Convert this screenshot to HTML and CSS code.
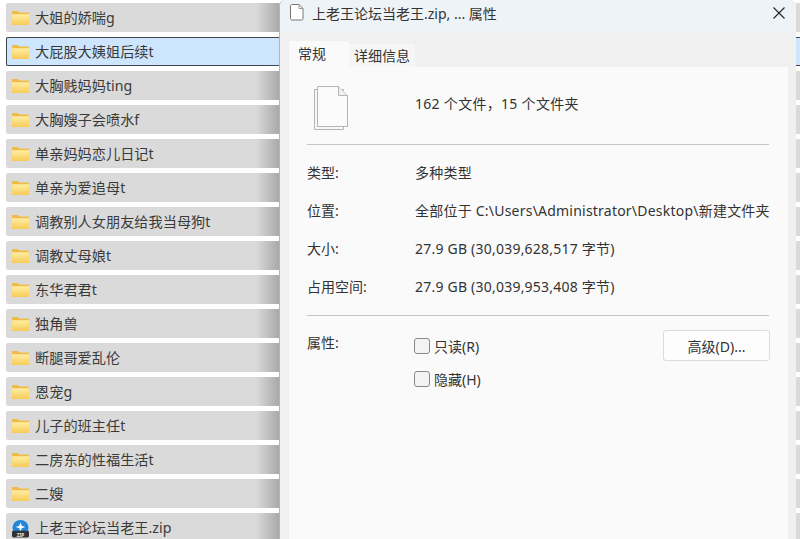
FILE: index.html
```html
<!DOCTYPE html>
<html lang="zh-CN">
<head>
<meta charset="utf-8">
<title>属性</title>
<link rel="stylesheet" href="styles.css">
</head>
<body>
<svg class="defs" width="0" height="0" aria-hidden="true">
  <defs>
    <linearGradient id="fg" x1="0" y1="0" x2="0" y2="1">
      <stop offset="0" stop-color="#ffeea6"/>
      <stop offset="1" stop-color="#f8cb57"/>
    </linearGradient>
    <symbol id="folder" viewBox="0 0 18 15">
      <path d="M0 1.200C0 .5.5 0 1.200 0H6l1.800 1.700H17c.6 0 1 .4 1 1V14c0 .6-.4 1-1 1H1c-.6 0-1-.4-1-1Z" fill="#efbb45"/>
      <path d="M0 3.400h18V14c0 .6-.4 1-1 1H1c-.6 0-1-.4-1-1Z" fill="url(#fg)"/>
    </symbol>
  </defs>
</svg>

<ul class="list">
  <li class="row"><svg class="ficon"><use href="#folder"/></svg>大姐的娇喘g</li>
  <li class="row row-sel"><svg class="ficon"><use href="#folder"/></svg>大屁股大姨姐后续t</li>
  <li class="row"><svg class="ficon"><use href="#folder"/></svg>大胸贱妈妈ting</li>
  <li class="row"><svg class="ficon"><use href="#folder"/></svg>大胸嫂子会喷水f</li>
  <li class="row"><svg class="ficon"><use href="#folder"/></svg>单亲妈妈恋儿日记t</li>
  <li class="row"><svg class="ficon"><use href="#folder"/></svg>单亲为爱追母t</li>
  <li class="row"><svg class="ficon"><use href="#folder"/></svg>调教别人女朋友给我当母狗t</li>
  <li class="row"><svg class="ficon"><use href="#folder"/></svg>调教丈母娘t</li>
  <li class="row"><svg class="ficon"><use href="#folder"/></svg>东华君君t</li>
  <li class="row"><svg class="ficon"><use href="#folder"/></svg>独角兽</li>
  <li class="row"><svg class="ficon"><use href="#folder"/></svg>断腿哥爱乱伦</li>
  <li class="row"><svg class="ficon"><use href="#folder"/></svg>恩宠g</li>
  <li class="row"><svg class="ficon"><use href="#folder"/></svg>儿子的班主任t</li>
  <li class="row"><svg class="ficon"><use href="#folder"/></svg>二房东的性福生活t</li>
  <li class="row"><svg class="ficon"><use href="#folder"/></svg>二嫂</li>
  <li class="row">
    <svg class="ficon ficon-zip" viewBox="0 0 18 19">
      <circle cx="9" cy="9" r="8.500" fill="#1f86dc"/>
      <path d="M9 3l1.300 3.700L14 8l-3.700 1.300L9 13 7.700 9.300 4 8l3.700-1.300Z" fill="#fff"/>
      <rect x="0" y="12" width="18" height="7" rx="1.500" fill="#2f3338"/>
      <text x="9" y="18" class="zip-label">ZIP</text>
    </svg>上老王论坛当老王.zip
  </li>
</ul>

<section class="dialog">
  <header class="titlebar">
    <svg class="title-icon" viewBox="0 0 14 17">
      <path d="M1.500.5h7.500l4 4v10a1.500 1.500 0 0 1-1.500 1.500h-10A1.500 1.500 0 0 1 .5 14.500V1.500Z" fill="#fff" stroke="#777"/>
      <path d="M9 .5v4h4" fill="none" stroke="#999"/>
    </svg>
    <span class="title-text">上老王论坛当老王.zip, ... 属性</span>
    <svg class="close" viewBox="0 0 12 12"><path d="M.5.5l11 11M11.500.5l-11 11" stroke="#222" stroke-width="1.100" fill="none"/></svg>
  </header>

  <nav class="tabs">
    <span class="tab tab-on">常规</span>
    <span class="tab">详细信息</span>
  </nav>

  <div class="panel">
    <div class="summary">
      <svg class="doc-icon" viewBox="0 0 34 44">
        <path d="M.5 3.500h29v40H.5Z" fill="#f7f7f7" stroke="#b4b4b4"/>
        <path d="M3.500.5h21l9 9v31h-30Z" fill="#fbfbfb" stroke="#b4b4b4"/>
        <path d="M24.500.5v9h9" fill="#f0f0f0" stroke="#b4b4b4"/>
      </svg>
      <span class="summary-text">162 个文件，15 个文件夹</span>
    </div>
    <hr class="rule">
    <dl class="info">
      <div class="info-row"><dt>类型:</dt><dd>多种类型</dd></div>
      <div class="info-row"><dt>位置:</dt><dd>全部位于 C:\Users\Administrator\Desktop\新建文件夹</dd></div>
      <div class="info-row"><dt>大小:</dt><dd>27.9 GB (30,039,628,517 字节)</dd></div>
      <div class="info-row"><dt>占用空间:</dt><dd>27.9 GB (30,039,953,408 字节)</dd></div>
    </dl>
    <hr class="rule">
    <div class="attrs">
      <span class="attrs-label">属性:</span>
      <div class="checks">
        <label class="check"><span class="box"></span>只读(R)</label>
        <label class="check"><span class="box"></span>隐藏(H)</label>
      </div>
      <span class="btn">高级(D)...</span>
    </div>
  </div>
</section>
</body>
</html>
```

FILE: styles.css
```css
* { box-sizing: border-box; }
html, body { height: 100%; }
body {
  margin: 0;
  overflow: hidden;
  background: #fff;
  color: #333;
  font-family: "Noto Sans", "Noto Sans CJK SC", sans-serif;
  font-size: 14px;
}
.defs { position: absolute; }

.list {
  list-style: none;
  margin: 0;
  padding: 3px 0 0 6px;
  display: flex;
  flex-direction: column;
  gap: 5px;
}
.row {
  height: 29px;
  display: flex;
  align-items: center;
  gap: 6px;
  padding: 1px 0 0 6px;
  background: linear-gradient(90deg, #dadada 0, #dadada 250px, #a9a9a9 273px, #dadada 273px);
  border-radius: 2px 0 0 2px;
  font-size: 14.200px;
  line-height: 1;
  color: #3a3a3a;
  white-space: nowrap;
}
.row-sel {
  background: #cde6fd;
  border: 1px solid #40464c;
  border-right: 0;
  padding: 1px 0 0 5px;
}
.ficon { width: 17px; height: 14px; flex: none; }
.ficon-zip { height: 19px; }
.zip-label {
  font-size: 5px;
  font-weight: 700;
  fill: #e8e8e8;
  text-anchor: middle;
}

.dialog {
  position: absolute;
  left: 279px;
  top: 0;
  width: 517px;
  height: 539px;
  background: #f0f0f0;
  border-left: 1px solid #b5b5b5;
  border-radius: 6px 6px 0 0;
  display: flex;
  flex-direction: column;
}
.titlebar {
  height: 32px;
  flex: none;
  display: flex;
  align-items: center;
  padding: 0 11px 7px 10px;
  background: #eef3f8;
  border-radius: 6px 6px 0 0;
}
.title-icon { width: 14px; height: 17px; flex: none; }
.title-text { margin-left: 8px; flex: 1; font-size: 14px; }
.close { width: 12px; height: 12px; flex: none; }

.tabs {
  height: 35px;
  flex: none;
  display: flex;
  align-items: flex-end;
  padding-left: 9px;
}
.tab {
  height: 23px;
  padding: 0 5px 2px;
  display: flex;
  align-items: center;
  background: #f6f6f6;
}
.tab-on {
  height: 26px;
  width: 60px;
  padding: 0 9px 2px;
  background: #fafafa;
}

.panel {
  flex: 1;
  margin: 0 8px 0 9px;
  padding: 0 19px 0 18px;
  background: #fafafa;
  display: flex;
  flex-direction: column;
}
.summary {
  height: 77px;
  display: flex;
  align-items: flex-start;
  gap: 67px;
  padding: 19px 0 0 7px;
}
.summary-text { line-height: 36px; letter-spacing: .3px; }
.doc-icon { width: 34px; height: 44px; flex: none; }
.rule {
  margin: 0;
  border: 0;
  border-top: 1px solid #c4c4c4;
}
.info {
  margin: 0;
  padding: 8px 0 10px;
  display: flex;
  flex-direction: column;
}
.info-row {
  height: 38px;
  display: flex;
  align-items: center;
}
.info-row dt { width: 108px; flex: none; }
.info-row dd { margin: 0; white-space: nowrap; letter-spacing: .22px; }

.attrs {
  display: flex;
  align-items: flex-start;
  padding-top: 14px;
}
.attrs-label { width: 107px; flex: none; line-height: 26px; }
.checks { flex: 1; display: flex; flex-direction: column; gap: 5px; padding-top: 2px; }
.check {
  height: 28px;
  display: flex;
  align-items: center;
  gap: 4px;
}
.box {
  width: 16px;
  height: 16px;
  border: 1px solid #8a8a8a;
  border-radius: 3px;
  background: #f3f3f3;
}
.btn {
  width: 107px;
  height: 31px;
  display: flex;
  align-items: center;
  justify-content: center;
  background: #fdfdfd;
  border: 1px solid #dcdcdc;
  border-radius: 3px;
  margin-right: -1px;
}
```
